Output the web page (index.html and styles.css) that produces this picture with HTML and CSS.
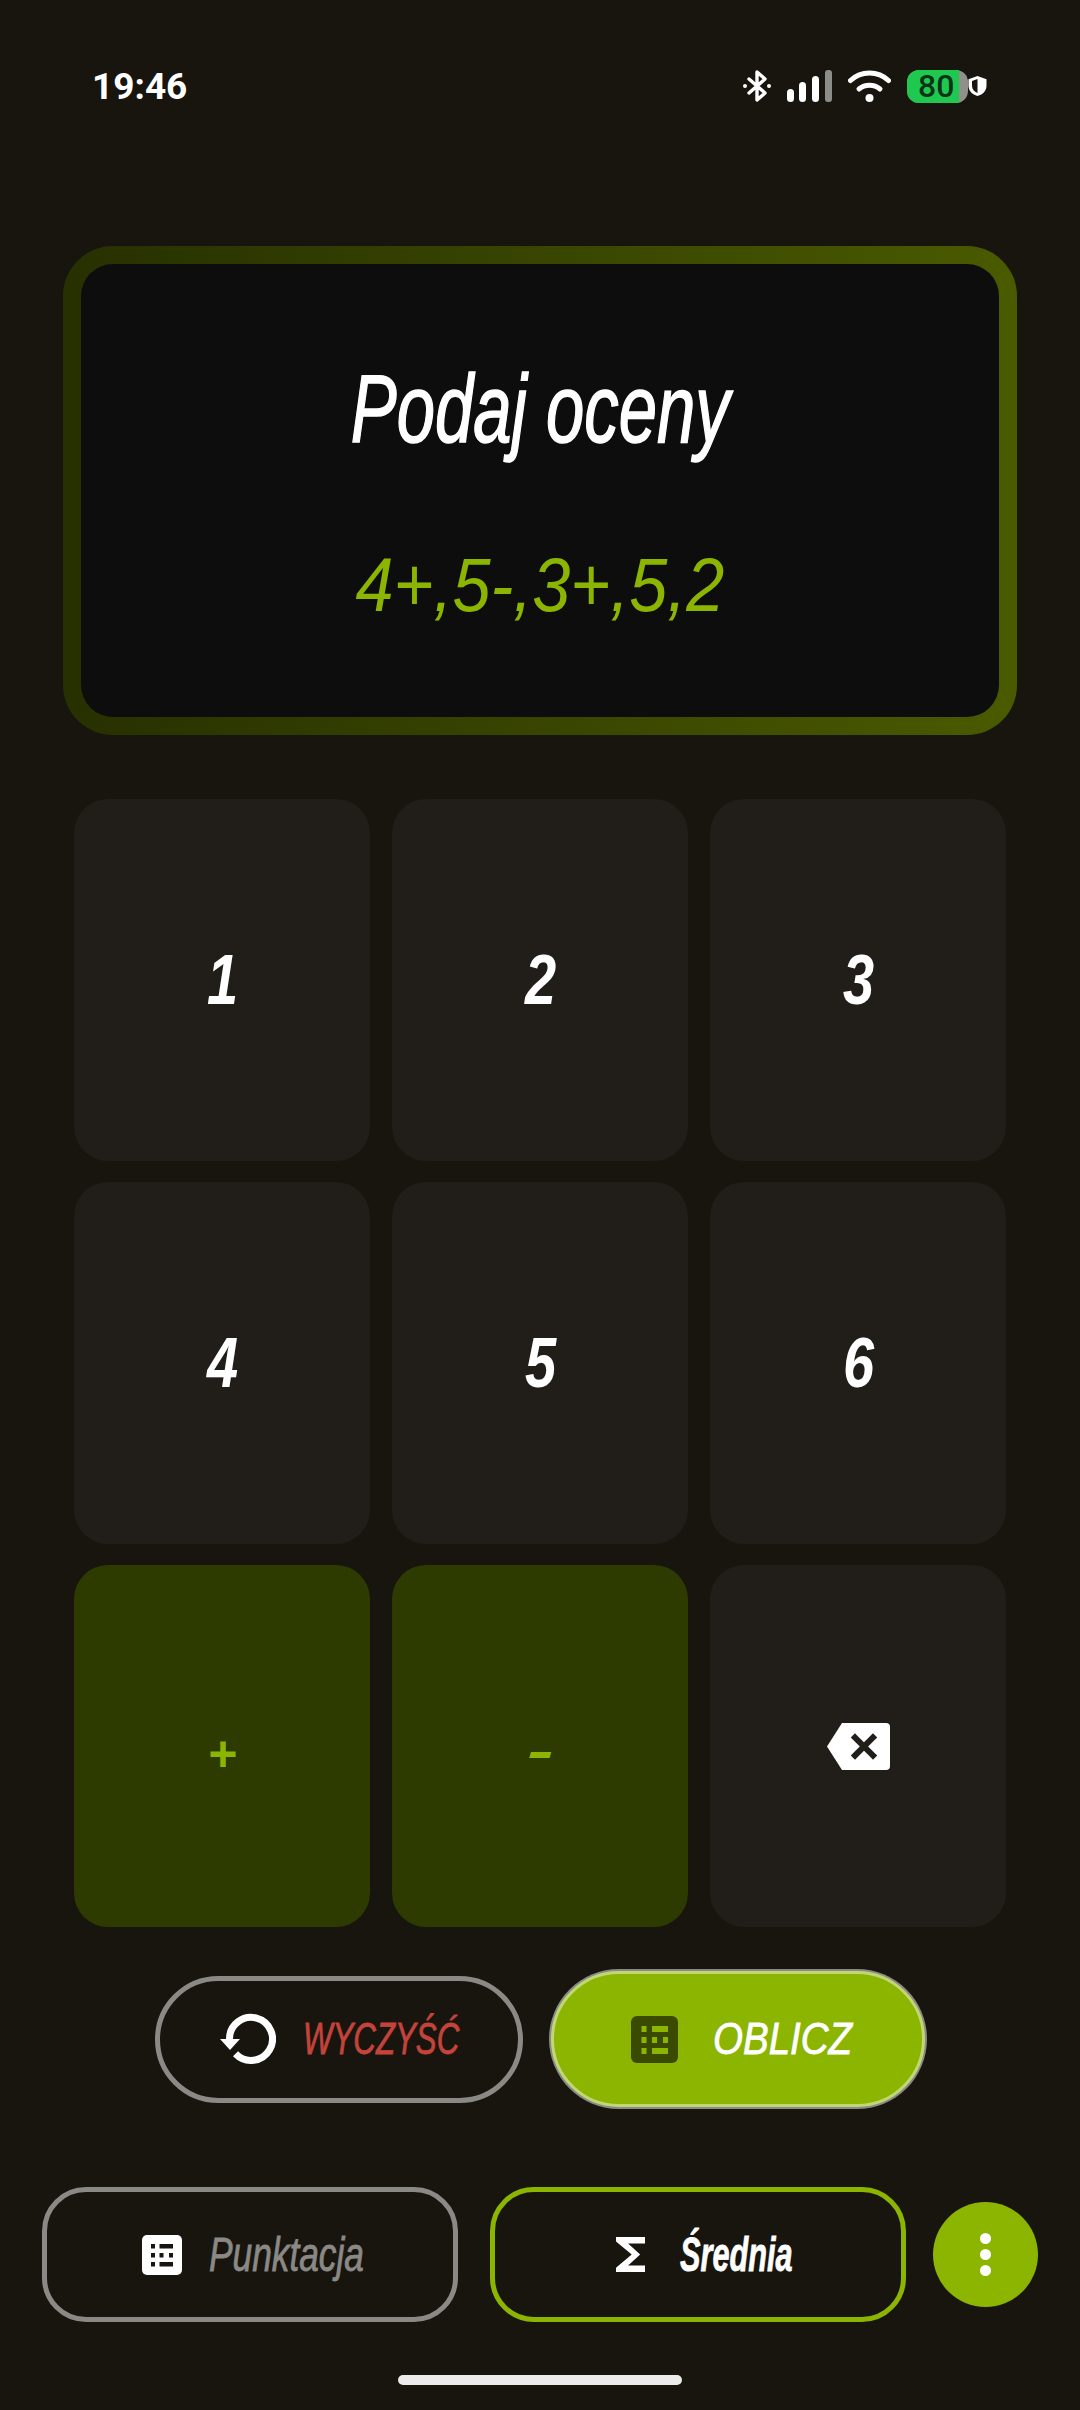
FILE: index.html
```html
<!DOCTYPE html>
<html lang="pl">
<head>
    <meta charset="UTF-8">
    <meta name="viewport" content="width=device-width, initial-scale=1.0">
    <title>Średnia ocen</title>
    <link rel="stylesheet" href="styles.css">
</head>
<body>
<div class="screen">
    <div class="status-bar">
        <span class="time">19:46</span>
        <div class="status-icons">
            <svg class="ic-bt" width="28" height="32" viewBox="0 0 28 32"><path d="M6 9l16 14-8 7V2l8 7L6 23" fill="none" stroke="#fff" stroke-width="3.4" stroke-linejoin="round" stroke-linecap="round"/><circle cx="2" cy="16" r="2" fill="#fff"/><circle cx="26" cy="16" r="2" fill="#fff"/></svg>
            <svg class="ic-signal" width="45" height="32" viewBox="0 0 45 32"><rect x="0" y="19" width="7" height="13" rx="3.5" fill="#fff"/><rect x="12" y="12" width="7" height="20" rx="3.5" fill="#fff"/><rect x="25" y="6" width="7" height="26" rx="3.5" fill="#fff"/><rect x="38" y="0" width="7" height="32" rx="3" fill="#8c8c88"/></svg>
            <svg class="ic-wifi" width="43" height="32" viewBox="0 0 43 32"><path d="M2.5 10.5C13 .5 30 .5 40.5 10.5" fill="none" stroke="#fff" stroke-width="5" stroke-linecap="round"/><path d="M11 19c6-5 15-5 21 0" fill="none" stroke="#fff" stroke-width="5" stroke-linecap="round"/><circle cx="21.5" cy="28" r="4" fill="#fff"/></svg>
            <div class="battery"><span class="battery-level">80</span></div>
            <svg class="ic-shield" width="21" height="22" viewBox="0 0 21 22"><path d="M10.5 1l9 3.2v6.5c0 5-3.6 8.700-9 10.300-5.400-1.600-9-5.300-9-10.300V4.200z" fill="#fff"/><path d="M10.500 4v14c-3.300-1.300-5.500-3.900-5.500-7.300V6z" fill="#18150f"/></svg>
        </div>
    </div>

    <div class="display">
        <h1 class="display-title">Podaj oceny</h1>
        <p class="display-value">4+,5-,3+,5,2</p>
    </div>

    <div class="keypad">
        <button class="key"><span>1</span></button>
        <button class="key"><span>2</span></button>
        <button class="key"><span>3</span></button>
        <button class="key"><span>4</span></button>
        <button class="key"><span>5</span></button>
        <button class="key"><span>6</span></button>
        <button class="key key-mod"><span class="sign-plus">+</span></button>
        <button class="key key-mod"><span class="sign-minus">-</span></button>
        <button class="key">
            <svg width="63" height="47" viewBox="0 0 63 47"><path d="M15 0h44a4 4 0 0 1 4 4v39a4 4 0 0 1-4 4H15L0 23.500z" fill="#fff"/><path d="M28 14.500l18 18M46 14.500l-18 18" stroke="#211d18" stroke-width="6" stroke-linecap="square"/></svg>
        </button>
    </div>

    <div class="actions">
        <button class="btn btn-clear">
            <svg width="56" height="52" viewBox="0 0 56 52"><path d="M9.500 26A21.500 21.500 0 1 1 15.500 40.800" fill="none" stroke="#fff" stroke-width="7"/><path d="M0 26h20L10 37z" fill="#fff"/></svg>
            <span class="label label-clear">WYCZYŚĆ</span>
        </button>
        <button class="btn btn-calc">
            <svg width="47" height="47" viewBox="0 0 47 47"><rect width="47" height="47" rx="6" fill="#3a4a00"/><path d="M10.500 10h5v6h-5zM21 10h16v6H21zM10.500 21h5v6h-5zM21 21h5v6h-5zM32 21h5v6h-5zM10.500 32h5v6h-5zM21 32h16v6H21z" fill="#8bb500"/></svg>
            <span class="label label-calc">OBLICZ</span>
        </button>
    </div>

    <div class="tabs">
        <button class="tab">
            <svg width="40" height="40" viewBox="0 0 40 40"><rect width="40" height="40" rx="5" fill="#fff"/><path d="M9 9h4v4.500H9zM17.500 9H31v4.500H17.500zM9 18h4v4.500H9zM17.500 18h4v4.500h-4zM27 18h4v4.500h-4zM9 27h4v4.500H9zM17.500 27H31v4.500H17.500z" fill="#18150f"/></svg>
            <span class="label label-points">Punktacja</span>
        </button>
        <button class="tab tab-active">
            <svg width="29" height="35" viewBox="6 4 12 16" preserveAspectRatio="none"><path d="M18 4H6v2l6.500 6L6 18v2h12v-3h-7l5-5-5-5h7z" fill="#fff"/></svg>
            <span class="label label-average">Średnia</span>
        </button>
        <button class="fab">
            <i></i><i></i><i></i>
        </button>
    </div>

    <div class="home-bar"></div>
</div>
</body>
</html>
```

FILE: styles.css
```css
* {
    box-sizing: border-box;
    margin: 0;
    padding: 0;
}

body {
    background: #18150f;
    font-family: 'Liberation Sans', sans-serif;
}

button {
    border: none;
    background: none;
    font: inherit;
    color: inherit;
}

.screen {
    width: 1080px;
    height: 2410px;
    display: flex;
    flex-direction: column;
    overflow: hidden;
}

/* status bar */
.status-bar {
    height: 172px;
    display: flex;
    justify-content: space-between;
    align-items: center;
    padding: 0 92px;
}

.time {
    font-family: Roboto, sans-serif;
    font-weight: 700;
    font-size: 37px;
    color: #fff;
}

.status-icons {
    display: flex;
    align-items: center;
    gap: 16px;
}

.battery {
    width: 61px;
    height: 33px;
    background: #8f8f8b;
    border-radius: 12px;
}

.battery-level {
    display: block;
    width: 52px;
    height: 33px;
    padding-left: 11px;
    border-radius: 12px 0 0 12px;
    background: #1fc950;
    color: #0b3317;
    font-family: Roboto, sans-serif;
    font-size: 32px;
    font-weight: 500;
    line-height: 33px;
}

.ic-shield {
    margin-left: -17px;
}

/* grades display */
.display {
    margin: 74px 63px 0;
    height: 489px;
    border: 18px solid transparent;
    border-radius: 50px;
    background:
        linear-gradient(#0d0d0d, #0d0d0d) padding-box,
        linear-gradient(90deg, #273000, #4a5a00) border-box;
    display: flex;
    flex-direction: column;
    align-items: center;
    padding-top: 90px;
}

.display-title {
    font-size: 96px;
    font-weight: 400;
    font-style: italic;
    line-height: 110px;
    color: #fff;
    -webkit-text-stroke: 1.5px #fff;
    transform: scaleX(.717);
}

.display-value {
    margin-top: 76px;
    font-size: 76px;
    font-style: italic;
    line-height: 90px;
    color: #8bb500;
    transform: scaleX(.9);
}

/* keypad */
.keypad {
    margin-top: 64px;
    padding: 0 74px;
    display: grid;
    grid-template-columns: repeat(3, 296px);
    grid-auto-rows: 362px;
    column-gap: 22px;
    row-gap: 21px;
}

.key {
    display: flex;
    justify-content: center;
    align-items: center;
    background: #211d18;
    border-radius: 34px;
    color: #fff;
    font-size: 70px;
    font-weight: 700;
    font-style: italic;
}

.key span {
    display: block;
    transform: scaleX(.8);
}

.key-mod {
    background: #2d3a00;
    color: #8bb500;
}

.key .sign-plus {
    font-size: 50px;
    transform: translateY(8px);
}

.key .sign-minus {
    font-size: 50px;
    transform: translateY(5px) scaleX(1.6);
}

/* clear and calculate */
.actions {
    margin-top: 44px;
    height: 136px;
    padding-left: 155px;
    display: flex;
    align-items: center;
    gap: 28px;
}

.btn {
    display: flex;
    justify-content: center;
    align-items: center;
    border-radius: 70px;
    font-size: 44px;
    font-style: italic;
}

.btn-clear {
    width: 368px;
    height: 127px;
    gap: 27px;
    border: 5px solid #8a8985;
    color: #c4433a;
}

.btn-calc {
    width: 374px;
    height: 136px;
    gap: 35px;
    padding-left: 7px;
    background: #8bb500;
    border: 3px solid #c0d873;
    box-shadow: 0 0 0 2px #8a8985;
    color: #fff;
}

.label {
    display: block;
    white-space: nowrap;
    transform-origin: left center;
    -webkit-text-stroke: .8px currentColor;
}

.label-clear {
    width: 156px;
    transform: scaleX(.71);
}

.label-calc {
    width: 139px;
    transform: scaleX(.875);
}

.label-points {
    width: 155px;
    transform: scaleX(.735);
}

.label-average {
    width: 112px;
    transform: scaleX(.64);
}

/* bottom tabs */
.tabs {
    margin-top: 80px;
    padding-left: 42px;
    display: flex;
    align-items: center;
    gap: 32px;
}

.tab {
    width: 416px;
    height: 135px;
    padding-left: 6px;
    display: flex;
    justify-content: center;
    align-items: center;
    gap: 27px;
    border: 5px solid #8a8985;
    border-radius: 44px;
    color: #8a8985;
    font-size: 48px;
    font-style: italic;
}

.tab-active {
    border-color: #8bb500;
    color: #fff;
    font-weight: 700;
    padding-left: 11px;
    gap: 35px;
}

.fab {
    width: 105px;
    height: 105px;
    margin-left: -5px;
    border-radius: 50%;
    background: #8bb500;
    display: flex;
    flex-direction: column;
    justify-content: center;
    align-items: center;
    gap: 5px;
}

.fab i {
    width: 11px;
    height: 11px;
    border-radius: 50%;
    background: #fff;
}

.home-bar {
    width: 284px;
    height: 10px;
    margin-top: 53px;
    align-self: center;
    background: #ebebeb;
    border-radius: 5px;
}
```
